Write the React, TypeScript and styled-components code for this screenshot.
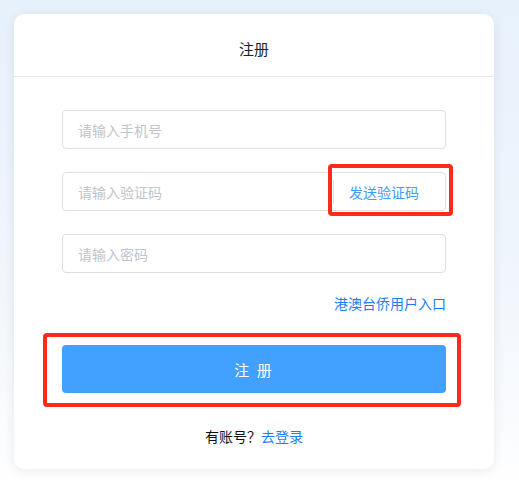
import React from 'react';
import styled, { createGlobalStyle } from 'styled-components';

const Global = createGlobalStyle`
  html, body {
    margin: 0;
    padding: 0;
  }
  body {
    width: 519px;
    height: 491px;
    overflow: hidden;
    font-family: "Microsoft YaHei", "Noto Sans CJK SC", "Liberation Sans", sans-serif;
    background: linear-gradient(180deg, #e7f1fc 0%, #edf4fc 40%, #f6f9fd 75%, #ffffff 100%);
  }
`;

const Page = styled.div`
  padding: 14px 25px 22px 14px;
`;

const Card = styled.div`
  width: 480px;
  height: 455px;
  background: #fff;
  border-radius: 10px;
  box-shadow: 0 2px 12px rgba(0, 0, 0, 0.08);
  display: flex;
  flex-direction: column;
`;

const Header = styled.div`
  height: 63px;
  box-sizing: border-box;
  padding-top: 6px;
  border-bottom: 1px solid #e6e6e6;
  display: flex;
  align-items: center;
  justify-content: center;
  font-size: 15px;
  color: #222;
`;

const Form = styled.div`
  padding: 33px 48px 0 48px;
  display: flex;
  flex-direction: column;
`;

const Field = styled.div<{ $gap?: number }>`
  position: relative;
  height: 39px;
  box-sizing: border-box;
  border: 1px solid #dcdfe6;
  border-radius: 4px;
  display: flex;
  align-items: center;
  margin-bottom: ${(p) => p.$gap ?? 23}px;
`;

const Input = styled.input`
  flex: 1;
  min-width: 0;
  height: 100%;
  border: none;
  outline: none;
  background: transparent;
  padding: 0 15px;
  font-size: 14px;
  font-family: inherit;
  color: #333;
  &::placeholder {
    color: #c0c4cc;
  }
`;

const CodeButton = styled.button`
  height: 24px;
  border: none;
  border-left: 1px solid #dcdfe6;
  background: transparent;
  padding: 0 26px 0 15px;
  font-size: 14px;
  font-family: inherit;
  color: #409eff;
  cursor: pointer;
`;

const Mark = styled.div<{ $inset: string }>`
  position: absolute;
  inset: ${(p) => p.$inset};
  border: 4px solid #ff2a1a;
  border-radius: 4px;
  pointer-events: none;
`;

const LinkRow = styled.div`
  display: flex;
  justify-content: flex-end;
  margin-top: 20px;
  height: 20px;
  align-items: center;
`;

const Link = styled.a`
  font-size: 14px;
  color: #1a7ef2;
  text-decoration: none;
  cursor: pointer;
`;

const ButtonWrap = styled.div`
  position: relative;
  margin-top: 32px;
`;

const Submit = styled.button`
  width: 100%;
  height: 48px;
  border: none;
  border-radius: 4px;
  background: #42a0ff;
  color: #fff;
  font-size: 15px;
  font-family: inherit;
  letter-spacing: 2px;
  cursor: pointer;
`;

const Footer = styled.div`
  margin-top: 33px;
  text-align: center;
  font-size: 14px;
  color: #111;
`;

export default function App() {
  return (
    <>
      <Global />
      <Page>
        <Card>
          <Header>注册</Header>
          <Form>
            <Field>
              <Input placeholder="请输入手机号" />
            </Field>
            <Field>
              <Input placeholder="请输入验证码" />
              <CodeButton>发送验证码</CodeButton>
              <Mark $inset="-9px -8px -6px 265px" />
            </Field>
            <Field $gap={0}>
              <Input type="password" placeholder="请输入密码" />
            </Field>
            <LinkRow>
              <Link>港澳台侨用户入口</Link>
            </LinkRow>
            <ButtonWrap>
              <Submit>注 册</Submit>
              <Mark $inset="-12px -15px -14px -19px" />
            </ButtonWrap>
            <Footer>
              有账号？<Link>去登录</Link>
            </Footer>
          </Form>
        </Card>
      </Page>
    </>
  );
}
